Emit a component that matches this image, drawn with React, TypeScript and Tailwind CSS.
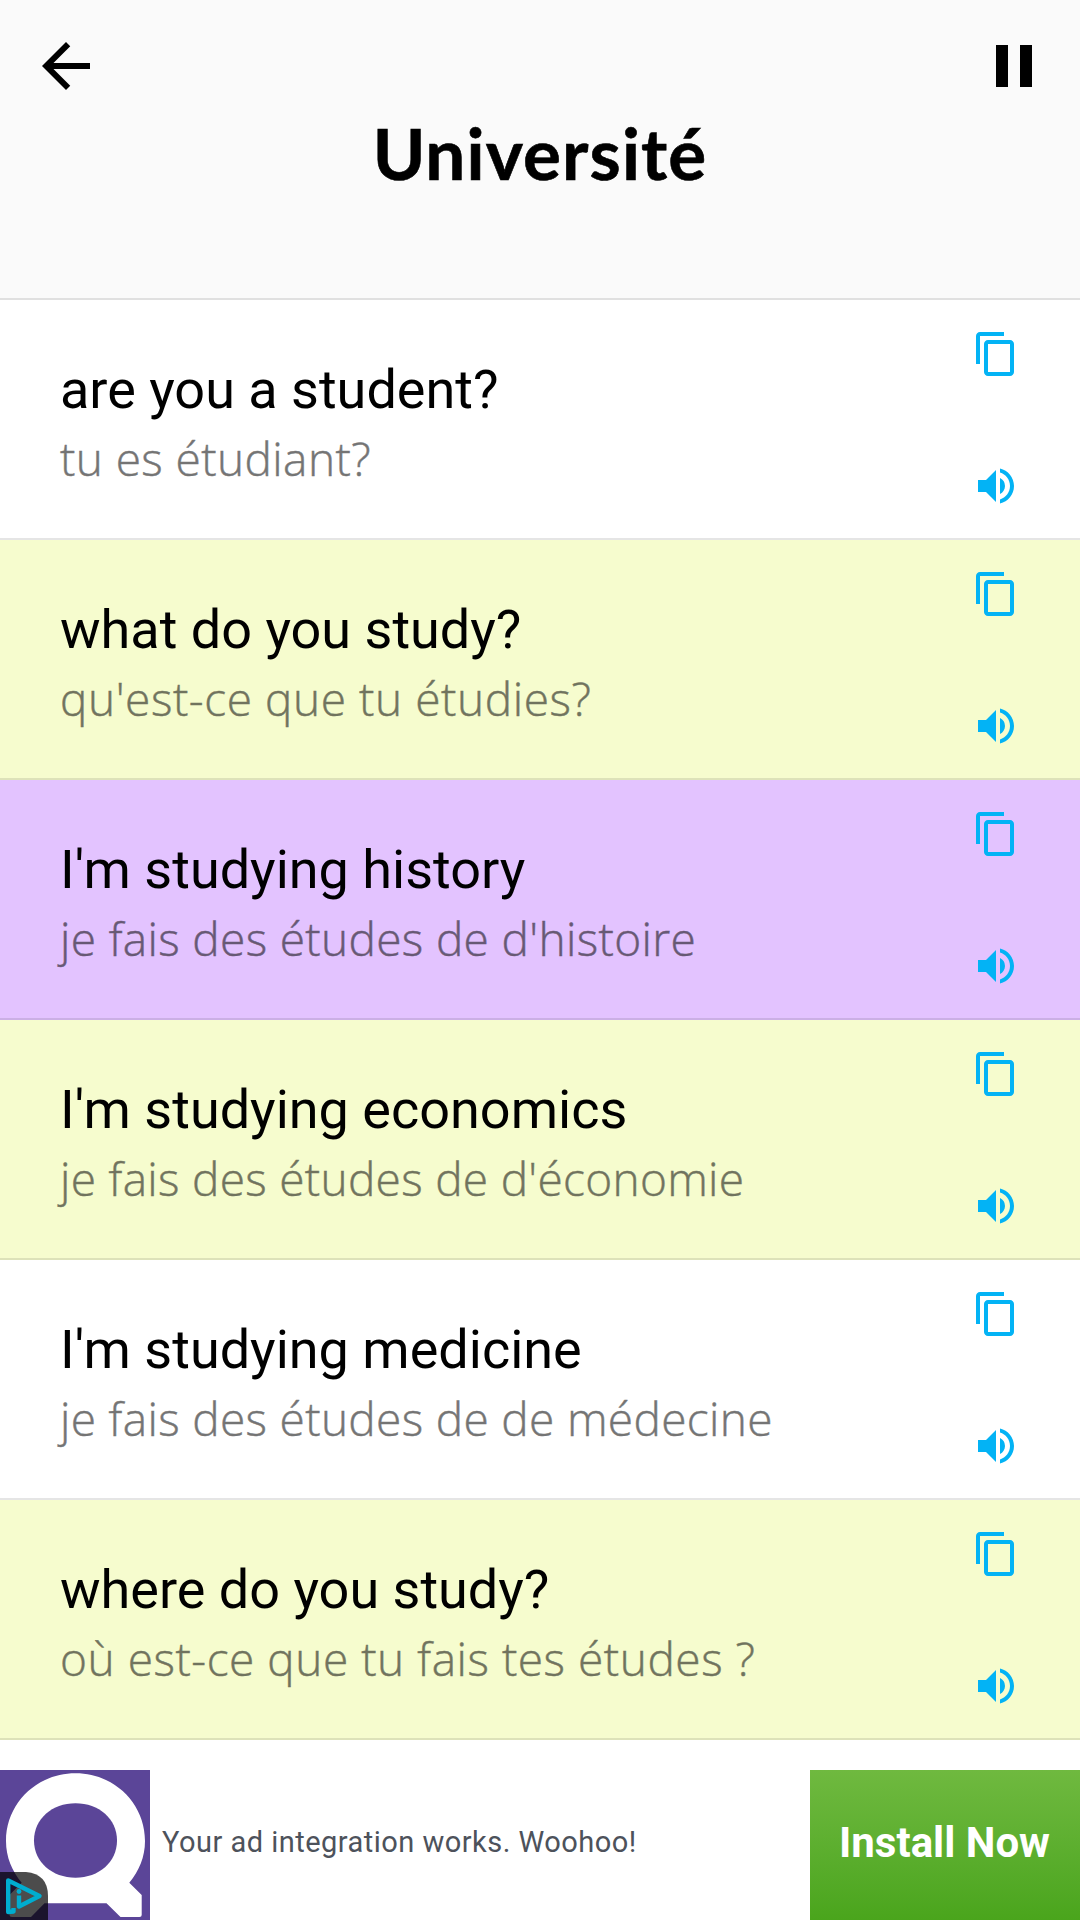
import { MdArrowBack, MdContentCopy, MdPause, MdVolumeUp } from "react-icons/md";

const PHRASES = [
  { text: "are you a student?", translation: "tu es étudiant?", bg: "bg-white", tracking: "tracking-[0.4px]" },
  { text: "what do you study?", translation: "qu'est-ce que tu étudies?", bg: "bg-[#f6fcce]", tracking: "tracking-[0.57px]" },
  { text: "I'm studying history", translation: "je fais des études de d'histoire", bg: "bg-[#e3c3ff]", tracking: "tracking-[0.34px]" },
  { text: "I'm studying economics", translation: "je fais des études de d'économie", bg: "bg-[#f6fcce]", tracking: "tracking-[0.3px]" },
  { text: "I'm studying medicine", translation: "je fais des études de de médecine", bg: "bg-white", tracking: "tracking-[0.33px]" },
  { text: "where do you study?", translation: "où est-ce que tu fais tes études ?", bg: "bg-[#f6fcce]", tracking: "tracking-[0.53px]" },
];

function Header() {
  return (
    <header className="h-[300px] border-b-2 border-black/10 bg-[#fafafa] px-[30px] pt-[30px]">
      <div className="flex items-center justify-between">
        <button type="button" aria-label="Back">
          <MdArrowBack className="size-[72px]" />
        </button>
        <button type="button" aria-label="Pause">
          <MdPause className="size-[72px]" />
        </button>
      </div>
      <h1 className="mt-[6px] text-center font-[Lato,sans-serif] text-[71px] leading-[90px] font-bold tracking-[1.1px] [-webkit-text-stroke:0.6px]">
        Université
      </h1>
    </header>
  );
}

function Phrase({ text, translation, bg, tracking }: (typeof PHRASES)[number]) {
  return (
    <li className={`flex h-[240px] justify-between border-b-2 border-black/10 px-[60px] ${bg}`}>
      <div className="pt-[58px]">
        <p className="text-[54px] leading-[64px] whitespace-nowrap">{text}</p>
        <p
          className={`mt-[3px] font-['Open_Sans',sans-serif] text-[46px] leading-[66px] font-light whitespace-nowrap opacity-54 [-webkit-text-stroke:0.5px] ${tracking}`}
        >
          {translation}
        </p>
      </div>
      <div className="flex h-[240px] flex-col justify-between py-[30px] text-[#03b3f5]">
        <button type="button" aria-label="Copy">
          <MdContentCopy className="size-12" />
        </button>
        <button type="button" aria-label="Listen">
          <MdVolumeUp className="size-12" />
        </button>
      </div>
    </li>
  );
}

function AdLogo() {
  return (
    <svg viewBox="0 0 150 150" className="size-[150px]">
      <rect width="150" height="150" fill="#5b4598" />
      <path
        fill="#fff"
        d="M75.500 3.300C114 3.300 145 33 145 71C145 87 139 101 129.300 112.700L141.700 125V145Q141.700 147 139.500 147H120.500L106.500 133.300H44.500L31 147H12Q9.500 147 9.500 144.500V125L21.700 112.700C12 101 6 87 6 71C6 33 37 3.300 75.500 3.300Z"
      />
      <path
        fill="#5b4598"
        d="M75.500 33.300C99 33.300 117 49 117 70.500C117 92 99 107.700 75.500 107.700C52 107.700 34 92 34 70.500C34 49 52 33.300 75.500 33.300Z"
      />
      <path fill="#000" fillOpacity=".7" d="M0 102H26Q48 104 48 126V150H0Z" />
      <g fill="none" stroke="#00add0" strokeWidth="4.400" strokeLinejoin="round">
        <path d="M13.500 138V141.500L8.200 142V110.500L39.500 126L19 136.500V125.500" />
      </g>
      <circle cx="19" cy="121.500" r="2.400" fill="#00add0" />
    </svg>
  );
}

function AdBanner() {
  return (
    <aside className="flex h-[150px] items-center bg-white">
      <AdLogo />
      <p className="ml-[12px] grow pb-[7px] text-[29px] leading-[34px] tracking-[0.48px] whitespace-nowrap text-[#4d525b]">
        Your ad integration works. Woohoo!
      </p>
      <button
        type="button"
        className="h-[150px] w-[270px] bg-linear-to-b from-[#6fb93f] to-[#4aa51c] pr-[1px] pb-[6px] text-[42px] font-bold whitespace-nowrap text-white"
      >
        Install Now
      </button>
    </aside>
  );
}

export default function App() {
  return (
    <div className="flex h-[1920px] w-[1080px] flex-col justify-between overflow-hidden bg-white font-[Roboto,sans-serif] text-black">
      <main>
        <Header />
        <ul>
          {PHRASES.map((phrase) => (
            <Phrase key={phrase.text} {...phrase} />
          ))}
        </ul>
      </main>
      <AdBanner />
    </div>
  );
}
